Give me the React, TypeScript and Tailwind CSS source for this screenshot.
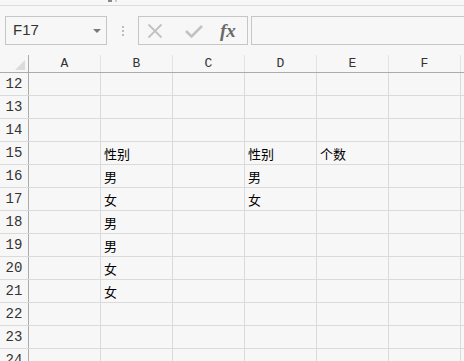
import React from "react";

const cols = ["A", "B", "C", "D", "E", "F"];

// cell contents keyed by row number, index = column
const data: Record<number, string[]> = {
  15: ["", "性别", "", "性别", "个数", ""],
  16: ["", "男", "", "男", "", ""],
  17: ["", "女", "", "女", "", ""],
  18: ["", "男", "", "", "", ""],
  19: ["", "男", "", "", "", ""],
  20: ["", "女", "", "", "", ""],
  21: ["", "女", "", "", "", ""],
};

const rows = [12, 13, 14, 15, 16, 17, 18, 19, 20, 21, 22, 23, 24];

const mono = { fontFamily: '"Liberation Mono", monospace' };

function Toolbar() {
  return (
    <div className="flex h-[29px] items-stretch pl-[5px]">
      <div className="flex w-[102px] items-center justify-between border border-[#c6c6c6] pl-[7px] pr-[5px]">
        <span className="text-[15px] text-[#333]" style={{ fontFamily: '"Liberation Sans", sans-serif' }}>
          F17
        </span>
        <span className="h-0 w-0 border-x-[4px] border-t-[4px] border-x-transparent border-t-[#7a7a7a]" />
      </div>
      <div className="flex w-[31px] flex-col items-center justify-center gap-[2px]">
        <span className="h-[2px] w-[2px] bg-[#bdbdbd]" />
        <span className="h-[2px] w-[2px] bg-[#bdbdbd]" />
        <span className="h-[2px] w-[2px] bg-[#bdbdbd]" />
      </div>
      <div className="flex w-[110px] items-center border border-[#c6c6c6] pl-[8px]">
        <svg width="16" height="16" viewBox="0 0 16 16" className="shrink-0">
          <path d="M1.5 1.5 L14.5 14.5 M14.5 1.5 L1.5 14.5" stroke="#c2c2c2" strokeWidth="1.8" fill="none" />
        </svg>
        <svg width="18" height="16" viewBox="0 0 18 16" className="ml-[22px] shrink-0">
          <path d="M1 8 L6.5 13.5 L17 3" stroke="#c2c2c2" strokeWidth="2.6" fill="none" />
        </svg>
        <span
          className="ml-[17px] text-[19px] font-bold italic leading-none text-[#6a6a6a]"
          style={{ fontFamily: '"Liberation Serif", serif' }}
        >
          fx
        </span>
      </div>
      <div className="ml-[3px] flex-1 border-y border-l border-[#c6c6c6]" />
    </div>
  );
}

function HeaderRow() {
  return (
    <div className="flex h-[18px] border-b border-[#ababab]">
      <div className="relative w-[29px] shrink-0 border-r border-[#ababab]">
        <span className="absolute bottom-[2px] right-[3px] h-0 w-0 border-b-[10px] border-l-[10px] border-b-[#dcdcdc] border-l-transparent" />
      </div>
      {cols.map((c) => (
        <div
          key={c}
          className="flex w-[72px] shrink-0 items-center justify-center border-r border-[#e2e2e2] text-[13px] text-[#333]"
          style={mono}
        >
          {c}
        </div>
      ))}
    </div>
  );
}

export default function App() {
  return (
    <div className="h-[361px] w-[464px] overflow-hidden bg-[#f7f7f7]">
      <div className="relative h-[6px] border-b border-[#dcdcdc]">
        <span className="absolute left-[108px] top-0 h-[2px] w-[4px] bg-[#888]" />
        <span className="absolute left-[115px] top-0 h-[2px] w-[2px] bg-[#ccc]" />
      </div>
      <div className="mt-[10px]">
        <Toolbar />
      </div>
      <div className="mt-[10px]">
        <HeaderRow />
        {rows.map((r) => (
          <div key={r} className="flex h-[23px] border-b border-[#dadada]">
            <div
              className="flex w-[29px] shrink-0 items-center justify-center border-r border-[#ababab] text-[14px] text-[#333]"
              style={mono}
            >
              {r}
            </div>
            {cols.map((c, i) => (
              <div
                key={c}
                className="flex w-[72px] shrink-0 items-center border-r border-[#dadada] pl-[3px] pt-[2px] text-[13px] text-black"
                style={{ fontFamily: '"Noto Sans CJK SC", sans-serif' }}
              >
                {data[r]?.[i] ?? ""}
              </div>
            ))}
          </div>
        ))}
      </div>
    </div>
  );
}
